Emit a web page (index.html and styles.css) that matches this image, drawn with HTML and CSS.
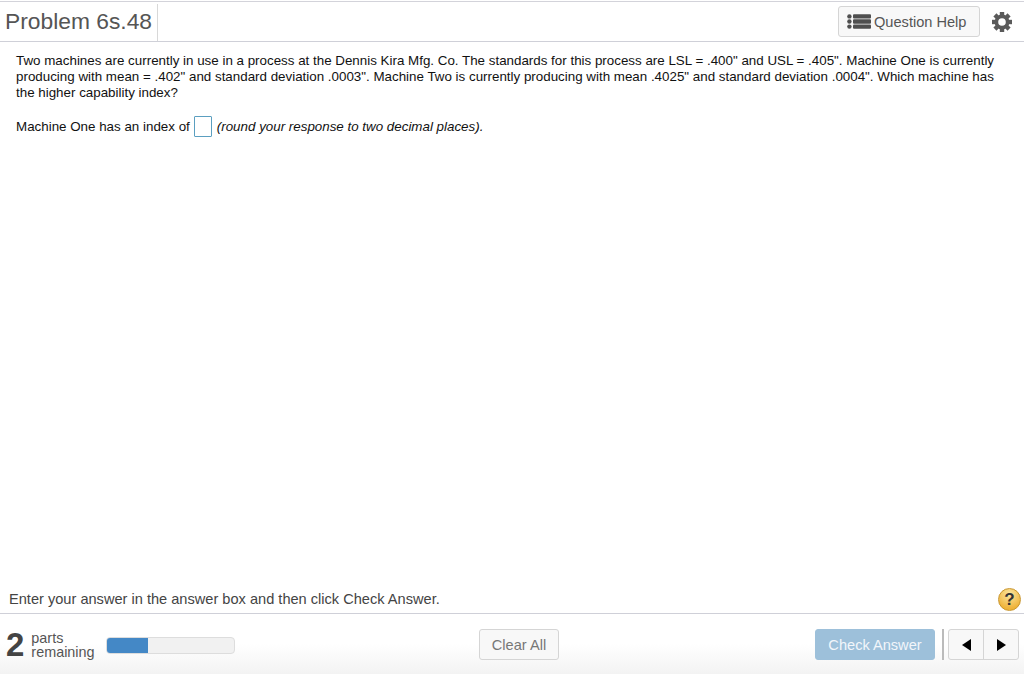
FILE: index.html
```html
<!DOCTYPE html>
<html lang="en">

<head>
    <meta charset="UTF-8">
    <title>Problem 6s.48</title>
    <link rel="stylesheet" href="styles.css">
</head>

<body>
    <!-- Header -->
    <header class="top-bar">
        <h1 class="title">Problem 6s.48</h1>
        <button class="btn help-btn">
            <svg class="list-icon" width="24" height="15" viewBox="0 0 24 15">
                <circle cx="2.4" cy="2.4" r="2.2"/>
                <circle cx="2.4" cy="7.5" r="2.2"/>
                <circle cx="2.4" cy="12.6" r="2.2"/>
                <rect x="6" y="0.2" width="18" height="4.4" rx="1"/>
                <rect x="6" y="5.3" width="18" height="4.4" rx="1"/>
                <rect x="6" y="10.4" width="18" height="4.4" rx="1"/>
            </svg>
            Question Help
        </button>
        <svg class="gear" width="20" height="20" viewBox="0 0 20 20">
            <circle cx="10" cy="10" r="5.6"/>
            <rect x="7.8" y="0" width="4.4" height="4"/>
            <rect x="7.8" y="0" width="4.4" height="4" transform="rotate(45 10 10)"/>
            <rect x="7.8" y="0" width="4.4" height="4" transform="rotate(90 10 10)"/>
            <rect x="7.8" y="0" width="4.4" height="4" transform="rotate(135 10 10)"/>
            <rect x="7.8" y="0" width="4.4" height="4" transform="rotate(180 10 10)"/>
            <rect x="7.8" y="0" width="4.4" height="4" transform="rotate(225 10 10)"/>
            <rect x="7.8" y="0" width="4.4" height="4" transform="rotate(270 10 10)"/>
            <rect x="7.8" y="0" width="4.4" height="4" transform="rotate(315 10 10)"/>
        </svg>
    </header>

    <!-- Question -->
    <main class="question">
        <p>Two machines are currently in use in a process at the Dennis Kira Mfg. Co. The standards for this process are LSL = .400" and USL = .405". Machine One is currently producing with mean = .402" and standard deviation .0003". Machine Two is currently producing with mean .4025" and standard deviation .0004". Which machine has the higher capability index?</p>
        <p class="answer-line">Machine One has an index of <span class="answer-box"></span> <em class="round-note">(round your response to two decimal places).</em></p>
    </main>

    <!-- Instruction -->
    <div class="instruction">
        <span>Enter your answer in the answer box and then click Check Answer.</span>
        <span class="help-dot">?</span>
    </div>

    <!-- Footer -->
    <footer class="bottom-bar">
        <div class="parts">
            <span class="parts-num">2</span>
            <span class="parts-text">parts<br>remaining</span>
            <div class="progress"><div class="progress-fill"></div></div>
        </div>
        <button class="btn clear-btn">Clear All</button>
        <div class="actions">
            <button class="btn check-btn">Check Answer</button>
            <span class="divider"></span>
            <div class="nav-group">
                <button class="nav-btn"><span class="arrow-left"></span></button>
                <button class="nav-btn"><span class="arrow-right"></span></button>
            </div>
        </div>
    </footer>
</body>

</html>
```

FILE: styles.css
```css
html, body {
    height: 100%;
}

body {
    margin: 0;
    display: flex;
    flex-direction: column;
    height: 674px;
    overflow: hidden;
    background-color: #fff;
    color: #111;
    font-family: "Liberation Sans", Arial, sans-serif;
    font-size: 13.37px;
}

.top-bar {
    margin-top: 1px;
    height: 39px;
    display: flex;
    align-items: center;
    border-top: 1px solid #d3d3da;
    border-bottom: 1px solid #cfd0d8;
}

.title {
    margin: 0;
    align-self: stretch;
    margin-top: 2px;
    padding: 0 5px;
    border-right: 1px solid #d8d8d8;
    color: #555;
    font-size: 22.8px;
    font-weight: normal;
    line-height: 34px;
}

.btn {
    font-family: inherit;
    border-radius: 3px;
    border: 1px solid #d5d5d5;
    background-color: #f8f8f8;
    color: #555;
}

.help-btn {
    margin-left: auto;
    display: flex;
    align-items: center;
    gap: 3px;
    box-sizing: border-box;
    width: 142px;
    height: 31px;
    padding: 0 0 0 8px;
    font-size: 14.6px;
}

.list-icon {
    fill: #4f4f4f;
}

.gear {
    margin: 0 12px;
    fill: #5a5a5a;
}

.gear circle {
    fill: none;
    stroke: #5a5a5a;
    stroke-width: 3.6;
}

.question {
    flex: 1;
    padding: 11px 16px 0;
}

.question p {
    margin: 0;
    line-height: 16px;
}

.question .answer-line {
    margin-top: 15px;
    display: flex;
    align-items: center;
    gap: 4px;
    line-height: 21px;
}

.answer-box {
    box-sizing: border-box;
    width: 18px;
    height: 21px;
    border: 1px solid #5b9fc0;
    border-radius: 1px;
}

.round-note {
    margin-left: 1px;
}

.instruction {
    display: flex;
    align-items: center;
    justify-content: space-between;
    height: 28px;
    padding: 0 3px 0 9px;
    color: #444;
    font-size: 14.6px;
}

.help-dot {
    box-sizing: border-box;
    width: 23px;
    height: 23px;
    border-radius: 50%;
    border: 1px solid #c9962f;
    background: radial-gradient(circle at 50% 25%, #fbe6a0, #efb33a 75%);
    color: #333;
    font-size: 17px;
    font-weight: bold;
    line-height: 21px;
    text-align: center;
}

.bottom-bar {
    height: 61px;
    box-sizing: border-box;
    display: grid;
    grid-template-columns: 1fr auto 1fr;
    align-items: start;
    padding-top: 15px;
    border-top: 1px solid #cfd0d8;
    background: linear-gradient(#fff 50%, #f3f3f3);
}

.parts {
    display: flex;
    align-items: center;
    height: 32px;
    padding-left: 6px;
}

.parts-num {
    color: #444;
    font-size: 33px;
    font-weight: bold;
    line-height: 32px;
}

.parts-text {
    margin-left: 7px;
    color: #555;
    font-size: 14.4px;
    line-height: 14px;
}

.progress {
    margin-left: 11px;
    width: 129px;
    height: 17px;
    box-sizing: border-box;
    border: 1px solid #ddd;
    border-radius: 4px;
    background-color: #f1f1f1;
    overflow: hidden;
}

.progress-fill {
    width: 33%;
    height: 100%;
    background-color: #4488c6;
}

.clear-btn {
    margin-left: 14px;
    width: 80px;
    height: 31px;
    color: #777;
    font-size: 14.6px;
}

.actions {
    display: flex;
    justify-content: flex-end;
    align-items: center;
    padding-right: 5px;
}

.check-btn {
    width: 120px;
    height: 31px;
    border-color: #9dc0da;
    background-color: #9dc0da;
    color: #f2f6fa;
    font-size: 14.6px;
}

.divider {
    width: 2px;
    height: 31px;
    margin: 0 4px 0 7px;
    background-color: #bbb;
}

.nav-group {
    display: flex;
    width: 71px;
    height: 31px;
    box-sizing: border-box;
    border: 1px solid #d5d5d5;
    border-radius: 3px;
    background-color: #f8f8f8;
}

.nav-btn {
    flex: 1;
    display: flex;
    align-items: center;
    justify-content: center;
    padding: 0;
    border: none;
    background: none;
}

.nav-btn + .nav-btn {
    border-left: 1px solid #d5d5d5;
}

.arrow-left,
.arrow-right {
    width: 0;
    height: 0;
    border-top: 6.5px solid transparent;
    border-bottom: 6.5px solid transparent;
}

.arrow-left {
    border-right: 9px solid #000;
}

.arrow-right {
    border-left: 9px solid #000;
}
```
